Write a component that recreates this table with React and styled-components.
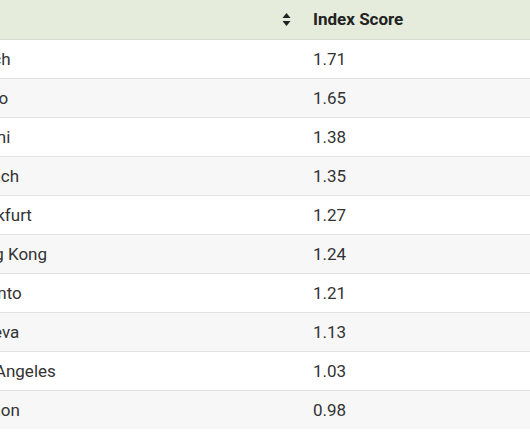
import React from "react";
import styled, { createGlobalStyle } from "styled-components";

const Global = createGlobalStyle`
  html, body { margin: 0; padding: 0; background: #fff; }
  body { font-family: Roboto, "Liberation Sans", Arial, sans-serif; }
`;

const Viewport = styled.div`
  width: 530px;
  height: 442px;
  overflow: hidden;
  background: #fff;
`;

const Table = styled.table`
  border-collapse: collapse;
  margin-left: -53px;
  width: 660px;
  font-size: 17px;
  color: #333;
`;

const HeadCell = styled.th`
  height: 39px;
  padding: 0 16px;
  box-sizing: border-box;
  background: #e6ecdb;
  border-bottom: 1px solid #d9ddd4;
  text-align: left;
  font-weight: 700;
  color: #222;
  width: ${(p) => p.$w || "auto"};
`;

const HeadInner = styled.div`
  display: flex;
  align-items: center;
  justify-content: space-between;
`;

const SortIcon = styled.svg`
  width: 9px;
  height: 13px;
  margin-right: -10px;
  display: block;
`;

const Row = styled.tr`
  background: ${(p) => (p.$alt ? "#f7f7f7" : "#ffffff")};
`;

const Cell = styled.td`
  height: 39px;
  padding: 0 16px;
  box-sizing: border-box;
  border-bottom: 1px solid ${(p) => (p.$last ? "transparent" : "#e2e2e2")};
  white-space: nowrap;
`;

const data = [
  ["Zurich", "1.71"],
  ["Tokyo", "1.65"],
  ["Miami", "1.38"],
  ["Munich", "1.35"],
  ["Frankfurt", "1.27"],
  ["Hong Kong", "1.24"],
  ["Toronto", "1.21"],
  ["Geneva", "1.13"],
  ["Los Angeles", "1.03"],
  ["London", "0.98"],
];

export default function App() {
  return (
    <>
      <Global />
      <Viewport>
        <Table>
          <thead>
            <tr>
              <HeadCell $w="350px">
                <HeadInner>
                  <span>City</span>
                  <SortIcon viewBox="0 0 9 13">
                    <path d="M4.5 0 L8.5 5 L0.5 5 Z" fill="#222" />
                    <path d="M0.5 8 L8.5 8 L4.5 13 Z" fill="#222" />
                  </SortIcon>
                </HeadInner>
              </HeadCell>
              <HeadCell>Index Score</HeadCell>
            </tr>
          </thead>
          <tbody>
            {data.map(([city, score], i) => (
              <Row key={city} $alt={i % 2 === 1}>
                <Cell $last={i === data.length - 1}>{city}</Cell>
                <Cell $last={i === data.length - 1}>{score}</Cell>
              </Row>
            ))}
          </tbody>
        </Table>
      </Viewport>
    </>
  );
}
